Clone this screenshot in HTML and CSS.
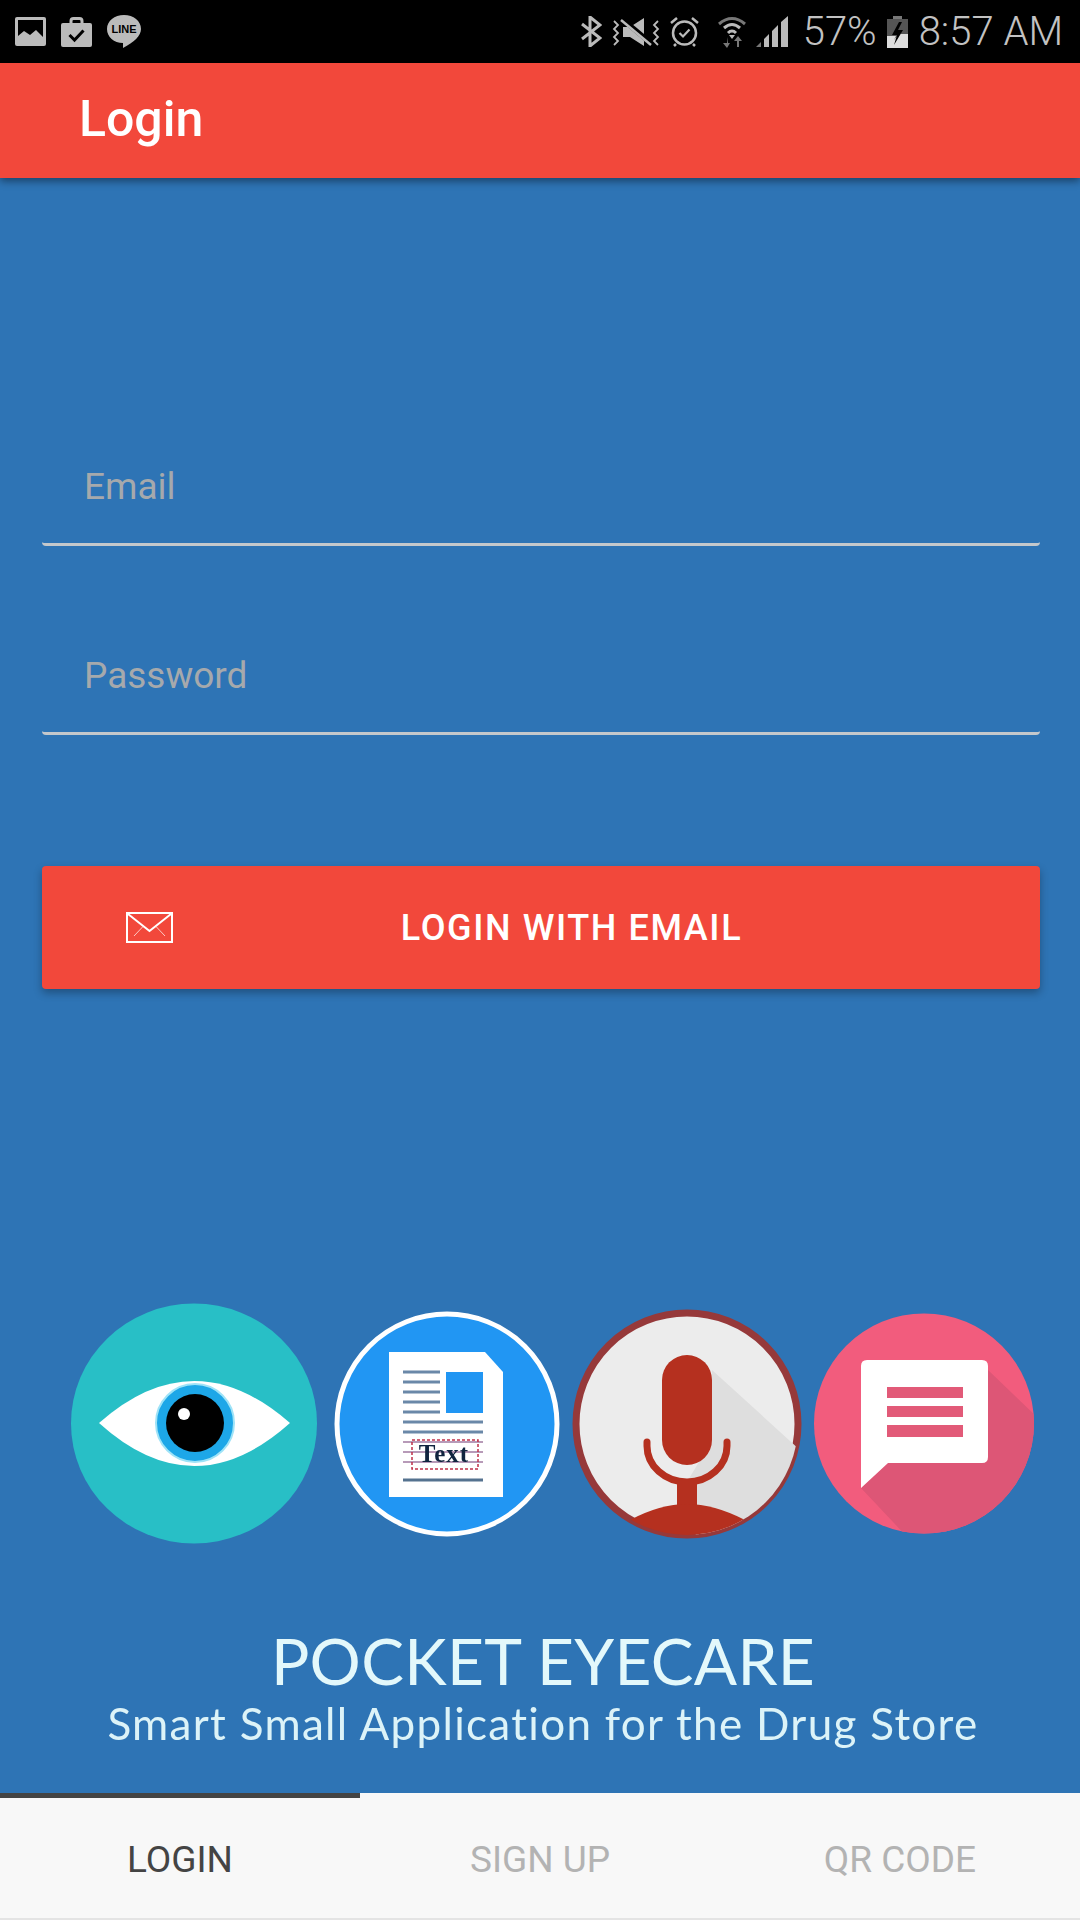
FILE: index.html
```html
<!DOCTYPE html>
<html lang="en">
<head>
  <meta charset="UTF-8">
  <title>Login</title>
  <link rel="stylesheet" href="styles.css">
</head>
<body>
  <div class="status-bar">
    <div class="status-left">
      <svg class="st-icon" width="31" height="29" viewBox="0 0 31 29">
        <rect width="31" height="29" rx="2" fill="#bbb"/>
        <path d="M3 3H28V20L21 13L15 18L9 14L3 19Z" fill="#000"/>
      </svg>
      <svg class="st-icon" width="31" height="30" viewBox="0 0 31 30">
        <rect y="6" width="31" height="24" rx="2" fill="#bbb"/>
        <path d="M10 7V4Q10 1.500 12.500 1.500H18.500Q21 1.500 21 4V7" fill="none" stroke="#bbb" stroke-width="3"/>
        <path d="M8.500 18L13.500 23L22.500 13.500" fill="none" stroke="#000" stroke-width="3"/>
      </svg>
      <svg class="st-icon" width="34" height="33" viewBox="0 0 34 33">
        <path d="M17 0C26.500 0 34 6 34 14C34 21 27 27 16 33V28C7 28 0 22 0 14C0 6 7.500 0 17 0Z" fill="#bbb"/>
        <text class="line-mark" x="17" y="18" text-anchor="middle">LINE</text>
      </svg>
    </div>
    <div class="status-right">
      <svg class="st-icon" width="22" height="31" viewBox="0 0 22 31">
        <path d="M2 8L20 22L10 30V1L20 9L2 23" fill="none" stroke="#bbb" stroke-width="3"/>
      </svg>
      <svg class="st-icon" width="48" height="30" viewBox="0 0 48 30">
        <path d="M11 10H18L32 1V29L18 20H11Z" fill="#bbb"/>
        <path d="M9 1L40 27" stroke="#000" stroke-width="5"/>
        <path d="M9 3L39 28" stroke="#bbb" stroke-width="2.500"/>
        <path d="M2 4L6 8L2 12L6 16L2 20L6 24L2 28M46 4L42 8L46 12L42 16L46 20L42 24L46 28" fill="none" stroke="#bbb" stroke-width="1.800"/>
      </svg>
      <svg class="st-icon" width="29" height="31" viewBox="0 0 29 31">
        <circle cx="14.500" cy="17" r="11.500" fill="none" stroke="#bbb" stroke-width="2.500"/>
        <path d="M9.500 17L13 20.500L19.500 13.500" fill="none" stroke="#bbb" stroke-width="2.200"/>
        <path d="M1 7L7 2M28 7L22 2M6 28L4 30M23 28L25 30" stroke="#bbb" stroke-width="2.500"/>
      </svg>
      <svg class="st-icon st-gap-wide" width="28" height="32" viewBox="0 0 28 32">
        <path d="M1 8Q14 -3 27 8" fill="none" stroke="#777" stroke-width="3"/>
        <path d="M6 12Q14 5 22 12" fill="none" stroke="#bbb" stroke-width="3"/>
        <path d="M10 17Q14 13 18 17" fill="none" stroke="#bbb" stroke-width="3"/>
        <path d="M11 19H17L14 23Z" fill="#bbb"/>
        <path d="M9 21V27H5L9 32L12 27H10M19 31V25H16L20 20L24 25H21V31" fill="#777"/>
      </svg>
      <svg class="st-icon" width="32" height="31" viewBox="0 0 32 31">
        <path d="M0 31L5 26V31Z" fill="#777"/>
        <path d="M8 23L13 18V31H8Z M16 15L22 9V31H16Z M25 6L32 0V31H25Z" fill="#bbb"/>
      </svg>
      <span class="st-text st-gap-mid">57%</span>
      <svg class="st-icon" width="21" height="32" viewBox="0 0 21 32">
        <rect x="6" width="9" height="3" fill="#777"/>
        <rect y="3" width="21" height="29" fill="#555"/>
        <path d="M0 20H9L7 24L14 15V32H0ZM14 18H21V32H7Z" fill="#ddd"/>
        <path d="M12 6L5 19H10L7 29L16 14H11L15 6Z" fill="#000"/>
      </svg>
      <span class="st-text st-gap-tight">8:57 AM</span>
    </div>
  </div>

  <header class="app-bar">Login</header>

  <main class="content">
    <form class="login-form">
      <div class="field"><label class="field-label">Email</label></div>
      <div class="field field-next"><label class="field-label">Password</label></div>
      <button class="login-btn" type="button">
        <svg width="47" height="31" viewBox="0 0 47 31">
          <rect x="1" y="1" width="45" height="29" fill="none" stroke="#fff" stroke-width="2"/>
          <path d="M2 2L23.500 19L45 2" fill="none" stroke="#fff" stroke-width="2"/>
          <path d="M8 24L17 14.500M39 24L30 14.500" fill="none" stroke="#fff" stroke-width="1" opacity="0.700"/>
        </svg>
        <span class="login-btn-text">LOGIN WITH EMAIL</span>
      </button>
    </form>

    <div class="promo">
      <svg class="promo-icons" width="1080" height="270" viewBox="0 1290 1080 270">
        <defs>
          <clipPath id="micClip"><circle cx="687" cy="1424" r="111"/></clipPath>
          <clipPath id="chatClip"><circle cx="924" cy="1423.500" r="110"/></clipPath>
        </defs>

        <!-- eye -->
        <ellipse cx="194" cy="1423.500" rx="123" ry="120" fill="#28bfc6"/>
        <path d="M99 1423Q194 1339 290 1423Q194 1509 99 1423Z" fill="#fff"/>
        <circle cx="195" cy="1423" r="39" fill="#1da7e8" stroke="#9fe3f7" stroke-width="2"/>
        <circle cx="195" cy="1423" r="29" fill="#000"/>
        <circle cx="184" cy="1414" r="6" fill="#fff"/>

        <!-- document -->
        <circle cx="447" cy="1424" r="110" fill="#2196f3" stroke="#fff" stroke-width="5"/>
        <path d="M389 1352H485L503 1372V1497H389Z" fill="#fff"/>
        <path d="M403 1372H440M403 1382H440M403 1392H440M403 1402H440M403 1412H440M403 1422H483M403 1432H483" stroke="#6a88a8" stroke-width="3"/>
        <rect x="446" y="1372" width="37" height="41" fill="#2196f3"/>
        <path d="M403 1442H483M403 1452H483M403 1462H483" stroke="#b79ab8" stroke-width="2"/>
        <path d="M403 1480H483" stroke="#55728f" stroke-width="3"/>
        <rect x="412" y="1440" width="66" height="29" fill="none" stroke="#c0304a" stroke-width="1.500" stroke-dasharray="3 2"/>
        <text class="doc-text" x="444" y="1462" text-anchor="middle">Text</text>

        <!-- mic -->
        <circle cx="687" cy="1424" r="111" fill="#ececec" stroke="#96393a" stroke-width="7"/>
        <path d="M712 1370L800 1450V1560H700L687 1482L712 1440Z" fill="#dedede" clip-path="url(#micClip)"/>
        <rect x="662" y="1355" width="50" height="110" rx="25" fill="#b5301f"/>
        <path d="M647 1442V1446A40 36 0 0 0 727 1446V1442" fill="none" stroke="#b5301f" stroke-width="7" stroke-linecap="round"/>
        <rect x="677" y="1480" width="20" height="30" fill="#b5301f"/>
        <path d="M630 1520Q660 1504 687 1504Q714 1504 745 1520V1545H630Z" fill="#b5301f" clip-path="url(#micClip)"/>

        <!-- chat -->
        <circle cx="924" cy="1423.500" r="110" fill="#f25c7d"/>
        <path d="M988 1370L1040 1420V1540H910L861 1488L888 1463Z" fill="#dd5676" clip-path="url(#chatClip)"/>
        <path d="M867 1360H982Q988 1360 988 1366V1457Q988 1463 982 1463H888L861 1488V1366Q861 1360 867 1360Z" fill="#fff"/>
        <rect x="887" y="1387" width="76" height="11" fill="#e25a78"/>
        <rect x="887" y="1406" width="76" height="11" fill="#e25a78"/>
        <rect x="887" y="1425" width="76" height="12" fill="#e25a78"/>
      </svg>
      <div class="promo-title">POCKET EYECARE</div>
      <div class="promo-sub">Smart Small Application for the Drug Store</div>
    </div>
  </main>

  <nav class="tabs">
    <div class="tab tab-active">LOGIN</div>
    <div class="tab">SIGN UP</div>
    <div class="tab">QR CODE</div>
  </nav>
</body>
</html>
```
FILE: styles.css
```css
body {
  font-family: Roboto, sans-serif;
  margin: 0;
  padding: 0;
  width: 1080px;
  height: 1920px;
  display: flex;
  flex-direction: column;
  overflow: hidden;
  background-color: #2e74b5;
}

.status-bar {
  height: 63px;
  flex: none;
  display: flex;
  justify-content: space-between;
  align-items: center;
  padding: 0 17px 0 15px;
  background-color: #000;
}

.status-left,
.status-right {
  display: flex;
  align-items: center;
  gap: 15px;
}

.status-right {
  gap: 10px;
}

.st-icon {
  display: block;
}

.st-gap-wide {
  margin-left: 9px;
}

.st-gap-mid {
  margin-left: 5px;
}

.st-gap-tight {
  margin-left: 1px;
}

.st-text {
  font-size: 40px;
  font-weight: 300;
  color: #c2c2c2;
  line-height: 63px;
}

.line-mark {
  font-family: "Liberation Sans", sans-serif;
  font-size: 11px;
  font-weight: 700;
  fill: #000;
}

.doc-text {
  font-family: "Liberation Serif", serif;
  font-size: 25px;
  font-weight: 700;
  letter-spacing: 1px;
  fill: #10243f;
}

.app-bar {
  position: relative;
  height: 115px;
  flex: none;
  padding-left: 79px;
  font-size: 50px;
  font-weight: 500;
  line-height: 113px;
  color: #fff;
  background-color: #f2483b;
  box-shadow: 0 3px 8px rgba(0, 0, 0, 0.45);
}

.content {
  flex: 1;
}

.login-form {
  padding: 268px 40px 0 42px;
}

.field {
  height: 97px;
  padding-left: 42px;
  border-bottom: 3px solid #c4c8cc;
  border-radius: 0 0 4px 4px;
}

.field-next {
  margin-top: 89px;
}

.field-label {
  display: block;
  font-size: 37px;
  line-height: 42px;
  padding-top: 20px;
  color: #a6a9ac;
}

.login-btn {
  width: 100%;
  height: 123px;
  margin-top: 131px;
  padding: 0 70px 0 84px;
  display: flex;
  align-items: center;
  border: none;
  border-radius: 4px;
  background-color: #f2483b;
  color: #fff;
  font-family: Roboto, sans-serif;
  box-shadow: 0 4px 8px rgba(0, 0, 0, 0.3);
}

.login-btn-text {
  flex: 1;
  text-align: center;
  font-size: 36px;
  font-weight: 500;
  letter-spacing: 1.6px;
}

.promo {
  margin-top: 301px;
  filter: blur(0.6px);
}

.promo-icons {
  display: block;
}

.promo-title {
  margin-top: 66px;
  padding-left: 6px;
  text-align: center;
  font-family: Lato, sans-serif;
  font-size: 64px;
  font-weight: 400;
  line-height: 70px;
  letter-spacing: 0.3px;
  color: #e3f8fb;
}

.promo-sub {
  margin-top: 2px;
  padding-left: 6px;
  text-align: center;
  font-family: Lato, sans-serif;
  font-size: 44px;
  font-weight: 400;
  line-height: 50px;
  letter-spacing: 1.3px;
  color: #dcf3f8;
}

.tabs {
  height: 125px;
  flex: none;
  display: grid;
  grid-template-columns: repeat(3, 360px);
  background-color: #f8f8f8;
  border-bottom: 2px solid #e4e4e4;
}

.tab {
  display: flex;
  align-items: center;
  justify-content: center;
  border-top: 5px solid transparent;
  padding-top: 2px;
  font-size: 37px;
  color: #b3b3b3;
}

.tab-active {
  border-top-color: #444;
  color: #444;
}
```
